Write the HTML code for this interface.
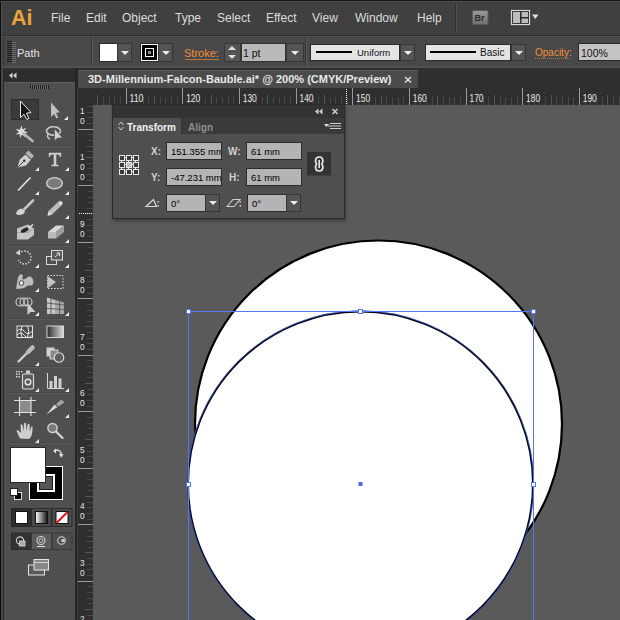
<!DOCTYPE html>
<html><head><meta charset="utf-8"><style>
*{margin:0;padding:0;box-sizing:border-box}
html,body{width:620px;height:620px;overflow:hidden;background:#5a5a5a;font-family:"Liberation Sans",sans-serif}
.a{position:absolute}
.mi{position:absolute;top:12px;font-size:12px;color:#dcdcdc;line-height:13px}
.t11{position:absolute;font-size:11px;line-height:12px}
.dd{position:absolute;background:#545454;border:1px solid #363636}
.dd:after{content:"";position:absolute;left:50%;top:50%;margin-left:-4px;margin-top:-2px;border-left:4px solid transparent;border-right:4px solid transparent;border-top:4px solid #ececec}
</style></head><body>
<div class="a" style="left:0;top:0;width:620px;height:35px;background:#404040;border-top:1px solid #181818"></div>
<div class="a" style="left:11px;top:7px;font-size:21.5px;font-weight:bold;color:#eca53a;line-height:22px">Ai</div>
<div class="mi" style="left:51px">File</div>
<div class="mi" style="left:86px">Edit</div>
<div class="mi" style="left:122px">Object</div>
<div class="mi" style="left:175px">Type</div>
<div class="mi" style="left:217px">Select</div>
<div class="mi" style="left:266px">Effect</div>
<div class="mi" style="left:312px">View</div>
<div class="mi" style="left:355px">Window</div>
<div class="mi" style="left:417px">Help</div>
<div class="a" style="left:455px;top:5px;width:1px;height:26px;background:#2f2f2f"></div>
<div class="a" style="left:456px;top:5px;width:1px;height:26px;background:#525252"></div>
<div class="a" style="left:0;top:35px;width:620px;height:33px;background:#484848;border-top:1px solid #2e2e2e"></div>
<div class="a" style="left:7px;top:41px;width:5px;height:22px;background:repeating-linear-gradient(#1e1e1e 0 1px,#484848 1px 2px)"></div>
<div class="a" style="left:12px;top:42px;width:4px;height:22px;background:repeating-linear-gradient(#6a6a6a 0 1px,#484848 1px 2px)"></div>
<div class="t11" style="left:17px;top:47px;font-size:11px;color:#e6e6e6">Path</div>
<div class="a" style="left:91px;top:38px;width:1px;height:28px;background:#333"></div>
<div class="a" style="left:92px;top:38px;width:1px;height:28px;background:#5c5c5c"></div>
<div class="a" style="left:305px;top:38px;width:1px;height:28px;background:#333"></div>
<div class="a" style="left:306px;top:38px;width:1px;height:28px;background:#5c5c5c"></div>
<div class="a" style="left:99px;top:43px;width:19px;height:19px;background:#fff;border:1px solid #2a2a2a"></div>
<div class="dd" style="left:117px;top:43px;width:15px;height:19px"></div>
<div class="a" style="left:140px;top:43px;width:19px;height:19px;background:#fff;border:1px solid #2a2a2a;padding:1px"><div style="width:15px;height:15px;background:#000;padding:3px"><div style="width:9px;height:9px;border:1px solid #fff;padding:1px"><div style="width:5px;height:5px;background:#000;padding:1px"><div style="width:3px;height:3px;background:#888"></div></div></div></div></div>
<div class="dd" style="left:158px;top:43px;width:15px;height:19px"></div>
<div class="t11" style="left:184px;top:47px;font-size:11px;color:#f0913a">Stroke:</div>
<div class="a" style="left:185px;top:59px;width:34px;height:1px;background:#b8763a"></div>
<div class="a" style="left:224px;top:43px;width:17px;height:19px;background:#545454;border:1px solid #363636"></div>
<div class="a" style="left:228px;top:46px;width:0;height:0;border-left:4px solid transparent;border-right:4px solid transparent;border-bottom:4px solid #ddd"></div>
<div class="a" style="left:228px;top:55px;width:0;height:0;border-left:4px solid transparent;border-right:4px solid transparent;border-top:4px solid #ddd"></div>
<div class="a" style="left:241px;top:43px;width:45px;height:19px;background:#b9b9b9;border:1px solid #333"></div>
<div class="t11" style="left:243px;top:47px;font-size:10.5px;color:#111">1 pt</div>
<div class="dd" style="left:286px;top:43px;width:18px;height:19px"></div>
<div class="a" style="left:310px;top:44px;width:90px;height:17px;background:#e4e4e4;border:1px solid #2a2a2a"></div>
<div class="a" style="left:316px;top:51px;width:36px;height:2px;background:#000"></div>
<div class="t11" style="left:357px;top:47px;font-size:9.5px;color:#111">Uniform</div>
<div class="dd" style="left:400px;top:44px;width:15px;height:17px"></div>
<div class="a" style="left:425px;top:44px;width:86px;height:17px;background:#e4e4e4;border:1px solid #2a2a2a"></div>
<div class="a" style="left:430px;top:51px;width:46px;height:2px;background:#000"></div>
<div class="t11" style="left:480px;top:47px;font-size:10px;color:#111">Basic</div>
<div class="dd" style="left:511px;top:44px;width:15px;height:17px"></div>
<div class="t11" style="left:535px;top:47px;font-size:10px;color:#f0913a">Opacity:</div>
<div class="a" style="left:535px;top:58px;width:35px;height:1px;background:repeating-linear-gradient(90deg,#b8763a 0 1px,transparent 1px 2px)"></div>
<div class="a" style="left:578px;top:43px;width:50px;height:18px;background:#c4c4c4;border:1px solid #2a2a2a"></div>
<div class="t11" style="left:581px;top:47px;font-size:10.5px;color:#111">100%</div>
<div class="a" style="left:0;top:36px;width:620px;height:1px;background:#515151"></div><div class="a" style="left:0;top:66px;width:620px;height:2px;background:#525252"></div>
<div class="a" style="left:0;top:68px;width:620px;height:21px;background:#303030"></div>
<div class="a" style="left:78px;top:70px;width:340px;height:18px;background:#4b4b4b;border-top:1px solid #575757"></div>
<div class="a" style="left:88px;top:73px;font-size:11px;font-weight:bold;color:#e8e8e8;line-height:13px">3D-Millennium-Falcon-Bauble.ai* @ 200% (CMYK/Preview)</div>
<svg class="a" style="left:0;top:0" width="620" height="100"><path d="M405,77 L411,82.5 M411,77 L405,82.5" stroke="#dcdcdc" stroke-width="1.5"/></svg>
<div class="a" style="left:0;top:0;width:1px;height:620px;background:#0e0e0e"></div>
<div class="a" style="left:1px;top:68px;width:3px;height:552px;background:#474747"></div>
<div class="a" style="left:3px;top:68px;width:1px;height:552px;background:#2a2a2a"></div>
<div class="a" style="left:1px;top:1px;width:1px;height:67px;background:#4c4c4c"></div>
<div class="a" style="left:3px;top:37px;width:1px;height:30px;background:#343434"></div>
<div class="a" style="left:0;top:1px;width:620px;height:1px;background:#4a4a4a"></div>
<div class="a" style="left:4px;top:70px;width:71px;height:550px;background:#4f4f4f"></div>
<div class="a" style="left:4px;top:70px;width:71px;height:12px;background:#2d2d2d"></div>
<div class="a" style="left:4px;top:82px;width:71px;height:1px;background:#5e5e5e"></div>
<div class="a" style="left:75px;top:68px;width:3px;height:552px;background:#262626"></div>
<div class="a" style="left:77px;top:88px;width:1px;height:532px;background:#3c3c3c"></div>
<div class="a" style="left:30px;top:85px;width:19px;height:4px;background:repeating-linear-gradient(90deg,#1e1e1e 0 1px,#6a6a6a 1px 2px)"></div>
<div class="a" style="left:11px;top:99px;width:28px;height:21px;background:#3a3a3a;border:1px solid #2e2e2e"></div>
<div class="a" style="left:8px;top:145px;width:64px;height:1px;background:#474747"></div>
<div class="a" style="left:8px;top:146px;width:64px;height:1px;background:#5a5a5a"></div>
<div class="a" style="left:8px;top:245px;width:64px;height:1px;background:#474747"></div>
<div class="a" style="left:8px;top:246px;width:64px;height:1px;background:#5a5a5a"></div>
<div class="a" style="left:8px;top:318px;width:64px;height:1px;background:#474747"></div>
<div class="a" style="left:8px;top:319px;width:64px;height:1px;background:#5a5a5a"></div>
<div class="a" style="left:8px;top:366px;width:64px;height:1px;background:#474747"></div>
<div class="a" style="left:8px;top:367px;width:64px;height:1px;background:#5a5a5a"></div>
<div class="a" style="left:8px;top:392px;width:64px;height:1px;background:#474747"></div>
<div class="a" style="left:8px;top:393px;width:64px;height:1px;background:#5a5a5a"></div>
<div class="a" style="left:8px;top:442px;width:64px;height:1px;background:#474747"></div>
<div class="a" style="left:8px;top:443px;width:64px;height:1px;background:#5a5a5a"></div>
<div class="a" style="left:78px;top:88px;width:542px;height:17px;background:#2f2f2f"></div>
<div class="a" style="left:78px;top:88px;width:15px;height:532px;background:#2f2f2f"></div>
<svg class="a" style="left:0;top:0" width="620" height="620" font-family="Liberation Sans, sans-serif"><line x1="97.5" y1="95" x2="97.5" y2="105" stroke="#555555" stroke-width="1"/><line x1="103.5" y1="97" x2="103.5" y2="105" stroke="#484848" stroke-width="1"/><line x1="109.5" y1="97" x2="109.5" y2="105" stroke="#484848" stroke-width="1"/><line x1="114.5" y1="97" x2="114.5" y2="105" stroke="#484848" stroke-width="1"/><line x1="120.5" y1="97" x2="120.5" y2="105" stroke="#484848" stroke-width="1"/><line x1="126.5" y1="88" x2="126.5" y2="105" stroke="#9a9a9a" stroke-width="1"/><line x1="131.5" y1="97" x2="131.5" y2="105" stroke="#484848" stroke-width="1"/><line x1="137.5" y1="97" x2="137.5" y2="105" stroke="#484848" stroke-width="1"/><line x1="143.5" y1="97" x2="143.5" y2="105" stroke="#484848" stroke-width="1"/><line x1="148.5" y1="97" x2="148.5" y2="105" stroke="#484848" stroke-width="1"/><line x1="154.5" y1="95" x2="154.5" y2="105" stroke="#555555" stroke-width="1"/><line x1="160.5" y1="97" x2="160.5" y2="105" stroke="#484848" stroke-width="1"/><line x1="165.5" y1="97" x2="165.5" y2="105" stroke="#484848" stroke-width="1"/><line x1="171.5" y1="97" x2="171.5" y2="105" stroke="#484848" stroke-width="1"/><line x1="177.5" y1="97" x2="177.5" y2="105" stroke="#484848" stroke-width="1"/><line x1="182.5" y1="88" x2="182.5" y2="105" stroke="#9a9a9a" stroke-width="1"/><line x1="188.5" y1="97" x2="188.5" y2="105" stroke="#484848" stroke-width="1"/><line x1="194.5" y1="97" x2="194.5" y2="105" stroke="#484848" stroke-width="1"/><line x1="199.5" y1="97" x2="199.5" y2="105" stroke="#484848" stroke-width="1"/><line x1="205.5" y1="97" x2="205.5" y2="105" stroke="#484848" stroke-width="1"/><line x1="211.5" y1="95" x2="211.5" y2="105" stroke="#555555" stroke-width="1"/><line x1="216.5" y1="97" x2="216.5" y2="105" stroke="#484848" stroke-width="1"/><line x1="222.5" y1="97" x2="222.5" y2="105" stroke="#484848" stroke-width="1"/><line x1="228.5" y1="97" x2="228.5" y2="105" stroke="#484848" stroke-width="1"/><line x1="233.5" y1="97" x2="233.5" y2="105" stroke="#484848" stroke-width="1"/><line x1="239.5" y1="88" x2="239.5" y2="105" stroke="#9a9a9a" stroke-width="1"/><line x1="245.5" y1="97" x2="245.5" y2="105" stroke="#484848" stroke-width="1"/><line x1="250.5" y1="97" x2="250.5" y2="105" stroke="#484848" stroke-width="1"/><line x1="256.5" y1="97" x2="256.5" y2="105" stroke="#484848" stroke-width="1"/><line x1="262.5" y1="97" x2="262.5" y2="105" stroke="#484848" stroke-width="1"/><line x1="267.5" y1="95" x2="267.5" y2="105" stroke="#555555" stroke-width="1"/><line x1="273.5" y1="97" x2="273.5" y2="105" stroke="#484848" stroke-width="1"/><line x1="279.5" y1="97" x2="279.5" y2="105" stroke="#484848" stroke-width="1"/><line x1="284.5" y1="97" x2="284.5" y2="105" stroke="#484848" stroke-width="1"/><line x1="290.5" y1="97" x2="290.5" y2="105" stroke="#484848" stroke-width="1"/><line x1="296.5" y1="88" x2="296.5" y2="105" stroke="#9a9a9a" stroke-width="1"/><line x1="301.5" y1="97" x2="301.5" y2="105" stroke="#484848" stroke-width="1"/><line x1="307.5" y1="97" x2="307.5" y2="105" stroke="#484848" stroke-width="1"/><line x1="313.5" y1="97" x2="313.5" y2="105" stroke="#484848" stroke-width="1"/><line x1="318.5" y1="97" x2="318.5" y2="105" stroke="#484848" stroke-width="1"/><line x1="324.5" y1="95" x2="324.5" y2="105" stroke="#555555" stroke-width="1"/><line x1="330.5" y1="97" x2="330.5" y2="105" stroke="#484848" stroke-width="1"/><line x1="335.5" y1="97" x2="335.5" y2="105" stroke="#484848" stroke-width="1"/><line x1="341.5" y1="97" x2="341.5" y2="105" stroke="#484848" stroke-width="1"/><line x1="347.5" y1="97" x2="347.5" y2="105" stroke="#484848" stroke-width="1"/><line x1="352.5" y1="88" x2="352.5" y2="105" stroke="#9a9a9a" stroke-width="1"/><line x1="358.5" y1="97" x2="358.5" y2="105" stroke="#484848" stroke-width="1"/><line x1="364.5" y1="97" x2="364.5" y2="105" stroke="#484848" stroke-width="1"/><line x1="369.5" y1="97" x2="369.5" y2="105" stroke="#484848" stroke-width="1"/><line x1="375.5" y1="97" x2="375.5" y2="105" stroke="#484848" stroke-width="1"/><line x1="381.5" y1="95" x2="381.5" y2="105" stroke="#555555" stroke-width="1"/><line x1="386.5" y1="97" x2="386.5" y2="105" stroke="#484848" stroke-width="1"/><line x1="392.5" y1="97" x2="392.5" y2="105" stroke="#484848" stroke-width="1"/><line x1="398.5" y1="97" x2="398.5" y2="105" stroke="#484848" stroke-width="1"/><line x1="403.5" y1="97" x2="403.5" y2="105" stroke="#484848" stroke-width="1"/><line x1="409.5" y1="88" x2="409.5" y2="105" stroke="#9a9a9a" stroke-width="1"/><line x1="415.5" y1="97" x2="415.5" y2="105" stroke="#484848" stroke-width="1"/><line x1="420.5" y1="97" x2="420.5" y2="105" stroke="#484848" stroke-width="1"/><line x1="426.5" y1="97" x2="426.5" y2="105" stroke="#484848" stroke-width="1"/><line x1="432.5" y1="97" x2="432.5" y2="105" stroke="#484848" stroke-width="1"/><line x1="437.5" y1="95" x2="437.5" y2="105" stroke="#555555" stroke-width="1"/><line x1="443.5" y1="97" x2="443.5" y2="105" stroke="#484848" stroke-width="1"/><line x1="449.5" y1="97" x2="449.5" y2="105" stroke="#484848" stroke-width="1"/><line x1="454.5" y1="97" x2="454.5" y2="105" stroke="#484848" stroke-width="1"/><line x1="460.5" y1="97" x2="460.5" y2="105" stroke="#484848" stroke-width="1"/><line x1="466.5" y1="88" x2="466.5" y2="105" stroke="#9a9a9a" stroke-width="1"/><line x1="471.5" y1="97" x2="471.5" y2="105" stroke="#484848" stroke-width="1"/><line x1="477.5" y1="97" x2="477.5" y2="105" stroke="#484848" stroke-width="1"/><line x1="483.5" y1="97" x2="483.5" y2="105" stroke="#484848" stroke-width="1"/><line x1="488.5" y1="97" x2="488.5" y2="105" stroke="#484848" stroke-width="1"/><line x1="494.5" y1="95" x2="494.5" y2="105" stroke="#555555" stroke-width="1"/><line x1="500.5" y1="97" x2="500.5" y2="105" stroke="#484848" stroke-width="1"/><line x1="505.5" y1="97" x2="505.5" y2="105" stroke="#484848" stroke-width="1"/><line x1="511.5" y1="97" x2="511.5" y2="105" stroke="#484848" stroke-width="1"/><line x1="517.5" y1="97" x2="517.5" y2="105" stroke="#484848" stroke-width="1"/><line x1="522.5" y1="88" x2="522.5" y2="105" stroke="#9a9a9a" stroke-width="1"/><line x1="528.5" y1="97" x2="528.5" y2="105" stroke="#484848" stroke-width="1"/><line x1="534.5" y1="97" x2="534.5" y2="105" stroke="#484848" stroke-width="1"/><line x1="539.5" y1="97" x2="539.5" y2="105" stroke="#484848" stroke-width="1"/><line x1="545.5" y1="97" x2="545.5" y2="105" stroke="#484848" stroke-width="1"/><line x1="551.5" y1="95" x2="551.5" y2="105" stroke="#555555" stroke-width="1"/><line x1="556.5" y1="97" x2="556.5" y2="105" stroke="#484848" stroke-width="1"/><line x1="562.5" y1="97" x2="562.5" y2="105" stroke="#484848" stroke-width="1"/><line x1="568.5" y1="97" x2="568.5" y2="105" stroke="#484848" stroke-width="1"/><line x1="573.5" y1="97" x2="573.5" y2="105" stroke="#484848" stroke-width="1"/><line x1="579.5" y1="88" x2="579.5" y2="105" stroke="#9a9a9a" stroke-width="1"/><line x1="585.5" y1="97" x2="585.5" y2="105" stroke="#484848" stroke-width="1"/><line x1="590.5" y1="97" x2="590.5" y2="105" stroke="#484848" stroke-width="1"/><line x1="596.5" y1="97" x2="596.5" y2="105" stroke="#484848" stroke-width="1"/><line x1="602.5" y1="97" x2="602.5" y2="105" stroke="#484848" stroke-width="1"/><line x1="607.5" y1="95" x2="607.5" y2="105" stroke="#555555" stroke-width="1"/><line x1="613.5" y1="97" x2="613.5" y2="105" stroke="#484848" stroke-width="1"/><line x1="619.5" y1="97" x2="619.5" y2="105" stroke="#484848" stroke-width="1"/><text x="129.5" y="101.6" font-size="10.5" fill="#e6e6e6" textLength="14" lengthAdjust="spacingAndGlyphs">110</text><text x="186.2" y="101.6" font-size="10.5" fill="#e6e6e6" textLength="14" lengthAdjust="spacingAndGlyphs">120</text><text x="242.8" y="101.6" font-size="10.5" fill="#e6e6e6" textLength="14" lengthAdjust="spacingAndGlyphs">130</text><text x="299.5" y="101.6" font-size="10.5" fill="#e6e6e6" textLength="14" lengthAdjust="spacingAndGlyphs">140</text><text x="356.1" y="101.6" font-size="10.5" fill="#e6e6e6" textLength="14" lengthAdjust="spacingAndGlyphs">150</text><text x="412.8" y="101.6" font-size="10.5" fill="#e6e6e6" textLength="14" lengthAdjust="spacingAndGlyphs">160</text><text x="469.5" y="101.6" font-size="10.5" fill="#e6e6e6" textLength="14" lengthAdjust="spacingAndGlyphs">170</text><text x="526.1" y="101.6" font-size="10.5" fill="#e6e6e6" textLength="14" lengthAdjust="spacingAndGlyphs">180</text><text x="582.8" y="101.6" font-size="10.5" fill="#e6e6e6" textLength="14" lengthAdjust="spacingAndGlyphs">190</text><line x1="346.5" y1="89" x2="346.5" y2="104" stroke="#f0f0f0" stroke-width="1" stroke-dasharray="1 1"/><clipPath id="vrc"><rect x="78" y="105" width="15" height="515"/></clipPath><g clip-path="url(#vrc)"><line x1="87" y1="106.5" x2="93" y2="106.5" stroke="#484848" stroke-width="1"/><line x1="87" y1="112.5" x2="93" y2="112.5" stroke="#484848" stroke-width="1"/><line x1="87" y1="117.5" x2="93" y2="117.5" stroke="#484848" stroke-width="1"/><line x1="87" y1="123.5" x2="93" y2="123.5" stroke="#484848" stroke-width="1"/><line x1="78" y1="129.5" x2="93" y2="129.5" stroke="#9a9a9a" stroke-width="1"/><line x1="87" y1="134.5" x2="93" y2="134.5" stroke="#484848" stroke-width="1"/><line x1="87" y1="140.5" x2="93" y2="140.5" stroke="#484848" stroke-width="1"/><line x1="87" y1="146.5" x2="93" y2="146.5" stroke="#484848" stroke-width="1"/><line x1="87" y1="151.5" x2="93" y2="151.5" stroke="#484848" stroke-width="1"/><line x1="85" y1="157.5" x2="93" y2="157.5" stroke="#555555" stroke-width="1"/><line x1="87" y1="163.5" x2="93" y2="163.5" stroke="#484848" stroke-width="1"/><line x1="87" y1="168.5" x2="93" y2="168.5" stroke="#484848" stroke-width="1"/><line x1="87" y1="174.5" x2="93" y2="174.5" stroke="#484848" stroke-width="1"/><line x1="87" y1="180.5" x2="93" y2="180.5" stroke="#484848" stroke-width="1"/><line x1="78" y1="185.5" x2="93" y2="185.5" stroke="#9a9a9a" stroke-width="1"/><line x1="87" y1="191.5" x2="93" y2="191.5" stroke="#484848" stroke-width="1"/><line x1="87" y1="197.5" x2="93" y2="197.5" stroke="#484848" stroke-width="1"/><line x1="87" y1="202.5" x2="93" y2="202.5" stroke="#484848" stroke-width="1"/><line x1="87" y1="208.5" x2="93" y2="208.5" stroke="#484848" stroke-width="1"/><line x1="85" y1="213.5" x2="93" y2="213.5" stroke="#555555" stroke-width="1"/><line x1="87" y1="219.5" x2="93" y2="219.5" stroke="#484848" stroke-width="1"/><line x1="87" y1="225.5" x2="93" y2="225.5" stroke="#484848" stroke-width="1"/><line x1="87" y1="230.5" x2="93" y2="230.5" stroke="#484848" stroke-width="1"/><line x1="87" y1="236.5" x2="93" y2="236.5" stroke="#484848" stroke-width="1"/><line x1="78" y1="242.5" x2="93" y2="242.5" stroke="#9a9a9a" stroke-width="1"/><line x1="87" y1="247.5" x2="93" y2="247.5" stroke="#484848" stroke-width="1"/><line x1="87" y1="253.5" x2="93" y2="253.5" stroke="#484848" stroke-width="1"/><line x1="87" y1="259.5" x2="93" y2="259.5" stroke="#484848" stroke-width="1"/><line x1="87" y1="264.5" x2="93" y2="264.5" stroke="#484848" stroke-width="1"/><line x1="85" y1="270.5" x2="93" y2="270.5" stroke="#555555" stroke-width="1"/><line x1="87" y1="276.5" x2="93" y2="276.5" stroke="#484848" stroke-width="1"/><line x1="87" y1="281.5" x2="93" y2="281.5" stroke="#484848" stroke-width="1"/><line x1="87" y1="287.5" x2="93" y2="287.5" stroke="#484848" stroke-width="1"/><line x1="87" y1="293.5" x2="93" y2="293.5" stroke="#484848" stroke-width="1"/><line x1="78" y1="298.5" x2="93" y2="298.5" stroke="#9a9a9a" stroke-width="1"/><line x1="87" y1="304.5" x2="93" y2="304.5" stroke="#484848" stroke-width="1"/><line x1="87" y1="310.5" x2="93" y2="310.5" stroke="#484848" stroke-width="1"/><line x1="87" y1="315.5" x2="93" y2="315.5" stroke="#484848" stroke-width="1"/><line x1="87" y1="321.5" x2="93" y2="321.5" stroke="#484848" stroke-width="1"/><line x1="85" y1="326.5" x2="93" y2="326.5" stroke="#555555" stroke-width="1"/><line x1="87" y1="332.5" x2="93" y2="332.5" stroke="#484848" stroke-width="1"/><line x1="87" y1="338.5" x2="93" y2="338.5" stroke="#484848" stroke-width="1"/><line x1="87" y1="343.5" x2="93" y2="343.5" stroke="#484848" stroke-width="1"/><line x1="87" y1="349.5" x2="93" y2="349.5" stroke="#484848" stroke-width="1"/><line x1="78" y1="355.5" x2="93" y2="355.5" stroke="#9a9a9a" stroke-width="1"/><line x1="87" y1="360.5" x2="93" y2="360.5" stroke="#484848" stroke-width="1"/><line x1="87" y1="366.5" x2="93" y2="366.5" stroke="#484848" stroke-width="1"/><line x1="87" y1="372.5" x2="93" y2="372.5" stroke="#484848" stroke-width="1"/><line x1="87" y1="377.5" x2="93" y2="377.5" stroke="#484848" stroke-width="1"/><line x1="85" y1="383.5" x2="93" y2="383.5" stroke="#555555" stroke-width="1"/><line x1="87" y1="389.5" x2="93" y2="389.5" stroke="#484848" stroke-width="1"/><line x1="87" y1="394.5" x2="93" y2="394.5" stroke="#484848" stroke-width="1"/><line x1="87" y1="400.5" x2="93" y2="400.5" stroke="#484848" stroke-width="1"/><line x1="87" y1="406.5" x2="93" y2="406.5" stroke="#484848" stroke-width="1"/><line x1="78" y1="411.5" x2="93" y2="411.5" stroke="#9a9a9a" stroke-width="1"/><line x1="87" y1="417.5" x2="93" y2="417.5" stroke="#484848" stroke-width="1"/><line x1="87" y1="423.5" x2="93" y2="423.5" stroke="#484848" stroke-width="1"/><line x1="87" y1="428.5" x2="93" y2="428.5" stroke="#484848" stroke-width="1"/><line x1="87" y1="434.5" x2="93" y2="434.5" stroke="#484848" stroke-width="1"/><line x1="85" y1="439.5" x2="93" y2="439.5" stroke="#555555" stroke-width="1"/><line x1="87" y1="445.5" x2="93" y2="445.5" stroke="#484848" stroke-width="1"/><line x1="87" y1="451.5" x2="93" y2="451.5" stroke="#484848" stroke-width="1"/><line x1="87" y1="456.5" x2="93" y2="456.5" stroke="#484848" stroke-width="1"/><line x1="87" y1="462.5" x2="93" y2="462.5" stroke="#484848" stroke-width="1"/><line x1="78" y1="468.5" x2="93" y2="468.5" stroke="#9a9a9a" stroke-width="1"/><line x1="87" y1="473.5" x2="93" y2="473.5" stroke="#484848" stroke-width="1"/><line x1="87" y1="479.5" x2="93" y2="479.5" stroke="#484848" stroke-width="1"/><line x1="87" y1="485.5" x2="93" y2="485.5" stroke="#484848" stroke-width="1"/><line x1="87" y1="490.5" x2="93" y2="490.5" stroke="#484848" stroke-width="1"/><line x1="85" y1="496.5" x2="93" y2="496.5" stroke="#555555" stroke-width="1"/><line x1="87" y1="502.5" x2="93" y2="502.5" stroke="#484848" stroke-width="1"/><line x1="87" y1="507.5" x2="93" y2="507.5" stroke="#484848" stroke-width="1"/><line x1="87" y1="513.5" x2="93" y2="513.5" stroke="#484848" stroke-width="1"/><line x1="87" y1="519.5" x2="93" y2="519.5" stroke="#484848" stroke-width="1"/><line x1="78" y1="524.5" x2="93" y2="524.5" stroke="#9a9a9a" stroke-width="1"/><line x1="87" y1="530.5" x2="93" y2="530.5" stroke="#484848" stroke-width="1"/><line x1="87" y1="536.5" x2="93" y2="536.5" stroke="#484848" stroke-width="1"/><line x1="87" y1="541.5" x2="93" y2="541.5" stroke="#484848" stroke-width="1"/><line x1="87" y1="547.5" x2="93" y2="547.5" stroke="#484848" stroke-width="1"/><line x1="85" y1="552.5" x2="93" y2="552.5" stroke="#555555" stroke-width="1"/><line x1="87" y1="558.5" x2="93" y2="558.5" stroke="#484848" stroke-width="1"/><line x1="87" y1="564.5" x2="93" y2="564.5" stroke="#484848" stroke-width="1"/><line x1="87" y1="569.5" x2="93" y2="569.5" stroke="#484848" stroke-width="1"/><line x1="87" y1="575.5" x2="93" y2="575.5" stroke="#484848" stroke-width="1"/><line x1="78" y1="581.5" x2="93" y2="581.5" stroke="#9a9a9a" stroke-width="1"/><line x1="87" y1="586.5" x2="93" y2="586.5" stroke="#484848" stroke-width="1"/><line x1="87" y1="592.5" x2="93" y2="592.5" stroke="#484848" stroke-width="1"/><line x1="87" y1="598.5" x2="93" y2="598.5" stroke="#484848" stroke-width="1"/><line x1="87" y1="603.5" x2="93" y2="603.5" stroke="#484848" stroke-width="1"/><line x1="85" y1="609.5" x2="93" y2="609.5" stroke="#555555" stroke-width="1"/><line x1="87" y1="615.5" x2="93" y2="615.5" stroke="#484848" stroke-width="1"/><text x="80" y="103.9" font-size="9.5" fill="#e6e6e6" textLength="4.6" lengthAdjust="spacingAndGlyphs">1</text><text x="80" y="113.9" font-size="9.5" fill="#e6e6e6" textLength="4.6" lengthAdjust="spacingAndGlyphs">1</text><text x="80" y="123.9" font-size="9.5" fill="#e6e6e6" textLength="4.6" lengthAdjust="spacingAndGlyphs">0</text><text x="80" y="160.4" font-size="9.5" fill="#e6e6e6" textLength="4.6" lengthAdjust="spacingAndGlyphs">1</text><text x="80" y="170.4" font-size="9.5" fill="#e6e6e6" textLength="4.6" lengthAdjust="spacingAndGlyphs">0</text><text x="80" y="180.4" font-size="9.5" fill="#e6e6e6" textLength="4.6" lengthAdjust="spacingAndGlyphs">0</text><text x="80" y="226.9" font-size="9.5" fill="#e6e6e6" textLength="4.6" lengthAdjust="spacingAndGlyphs">9</text><text x="80" y="236.9" font-size="9.5" fill="#e6e6e6" textLength="4.6" lengthAdjust="spacingAndGlyphs">0</text><text x="80" y="283.4" font-size="9.5" fill="#e6e6e6" textLength="4.6" lengthAdjust="spacingAndGlyphs">8</text><text x="80" y="293.4" font-size="9.5" fill="#e6e6e6" textLength="4.6" lengthAdjust="spacingAndGlyphs">0</text><text x="80" y="339.9" font-size="9.5" fill="#e6e6e6" textLength="4.6" lengthAdjust="spacingAndGlyphs">7</text><text x="80" y="349.9" font-size="9.5" fill="#e6e6e6" textLength="4.6" lengthAdjust="spacingAndGlyphs">0</text><text x="80" y="396.4" font-size="9.5" fill="#e6e6e6" textLength="4.6" lengthAdjust="spacingAndGlyphs">6</text><text x="80" y="406.4" font-size="9.5" fill="#e6e6e6" textLength="4.6" lengthAdjust="spacingAndGlyphs">0</text><text x="80" y="452.9" font-size="9.5" fill="#e6e6e6" textLength="4.6" lengthAdjust="spacingAndGlyphs">5</text><text x="80" y="462.9" font-size="9.5" fill="#e6e6e6" textLength="4.6" lengthAdjust="spacingAndGlyphs">0</text><text x="80" y="509.4" font-size="9.5" fill="#e6e6e6" textLength="4.6" lengthAdjust="spacingAndGlyphs">4</text><text x="80" y="519.4" font-size="9.5" fill="#e6e6e6" textLength="4.6" lengthAdjust="spacingAndGlyphs">0</text><text x="80" y="565.9" font-size="9.5" fill="#e6e6e6" textLength="4.6" lengthAdjust="spacingAndGlyphs">3</text><text x="80" y="575.9" font-size="9.5" fill="#e6e6e6" textLength="4.6" lengthAdjust="spacingAndGlyphs">0</text><text x="80" y="622.4" font-size="9.5" fill="#e6e6e6" textLength="4.6" lengthAdjust="spacingAndGlyphs">2</text><text x="80" y="632.4" font-size="9.5" fill="#e6e6e6" textLength="4.6" lengthAdjust="spacingAndGlyphs">0</text><line x1="79" y1="213.5" x2="92" y2="213.5" stroke="#f0f0f0" stroke-width="1" stroke-dasharray="1 1"/></g></svg>
<svg class="a" style="left:0;top:0" width="620" height="620">
<clipPath id="cv"><rect x="94" y="105" width="526" height="515"/></clipPath>
<g clip-path="url(#cv)">
<circle cx="378.5" cy="424" r="183.5" fill="#fff" stroke="#000" stroke-width="2.2"/>
<circle cx="360.5" cy="484" r="172.5" fill="#fff" stroke="#05051a" stroke-width="2"/>
<circle cx="360.5" cy="484" r="173.3" fill="none" stroke="#4a6ee0" stroke-width="0.8" opacity="0.85"/>
<rect x="188.5" y="311.5" width="345" height="400" fill="none" stroke="#5577ee" stroke-width="1"/>
<rect x="186.5" y="309.5" width="4" height="4" fill="#fff" stroke="#5577ee" stroke-width="1"/>
<rect x="358.5" y="309.5" width="4" height="4" fill="#fff" stroke="#5577ee" stroke-width="1"/>
<rect x="531.5" y="309.5" width="4" height="4" fill="#fff" stroke="#5577ee" stroke-width="1"/>
<rect x="186.5" y="482.5" width="4" height="4" fill="#fff" stroke="#5577ee" stroke-width="1"/>
<rect x="531.5" y="482.5" width="4" height="4" fill="#fff" stroke="#5577ee" stroke-width="1"/>
<rect x="358.5" y="482" width="4" height="4" fill="#4a6ee0"/>
</g></svg>
<div class="a" style="left:112px;top:104px;width:233px;height:115px;background:#2a2a2a;box-shadow:1px 2px 3px rgba(0,0,0,0.35)"></div>
<div class="a" style="left:113px;top:105px;width:231px;height:13px;background:#333333"></div>
<div class="a" style="left:113px;top:118px;width:231px;height:16px;background:#3a3a3a"></div>
<div class="a" style="left:113px;top:118px;width:68px;height:16px;background:#4f4f4f"></div>
<div class="a" style="left:113px;top:134px;width:231px;height:84px;background:#4f4f4f"></div>
<svg class="a" style="left:0;top:0" width="620" height="620"><path d="M315,111.5 L318.5,108.5 L318.5,114.5 Z M319,111.5 L322.5,108.5 L322.5,114.5 Z" fill="#d0d0d0"/><path d="M332.5,109 L337.5,114 M337.5,109 L332.5,114" stroke="#d8d8d8" stroke-width="1.3"/><path d="M118.5,125 L121,122 L123.5,125 M118.5,127 L121,130 L123.5,127" stroke="#d0d0d0" stroke-width="1" fill="none"/><path d="M324,124 L329,124 L326.5,127 Z" fill="#e0e0e0"/><path d="M330,123.5 H341 M328,126 H341 M330,128.5 H341" stroke="#d0d0d0" stroke-width="1"/></svg>
<div class="a" style="left:127px;top:122px;font-size:10px;font-weight:bold;color:#f2f2f2;line-height:11px">Transform</div>
<div class="a" style="left:188px;top:122px;font-size:10px;font-weight:bold;color:#8e8e8e;line-height:11px">Align</div>
<svg class="a" style="left:0;top:0" width="620" height="620"><rect x="119.5" y="155.5" width="5" height="5" fill="#3a3a3a" stroke="#e6e6e6" stroke-width="1"/><rect x="119.5" y="162.5" width="5" height="5" fill="#3a3a3a" stroke="#e6e6e6" stroke-width="1"/><rect x="119.5" y="169.5" width="5" height="5" fill="#3a3a3a" stroke="#e6e6e6" stroke-width="1"/><line x1="124.5" y1="157.5" x2="126.5" y2="157.5" stroke="#e6e6e6"/><line x1="131.5" y1="157.5" x2="133.5" y2="157.5" stroke="#e6e6e6"/><line x1="121.5" y1="160.5" x2="121.5" y2="162.5" stroke="#e6e6e6"/><line x1="121.5" y1="167.5" x2="121.5" y2="169.5" stroke="#e6e6e6"/><rect x="126.5" y="155.5" width="5" height="5" fill="#3a3a3a" stroke="#e6e6e6" stroke-width="1"/><rect x="126.5" y="162.5" width="5" height="5" fill="#bdbdbd" stroke="#e6e6e6" stroke-width="1"/><rect x="126.5" y="169.5" width="5" height="5" fill="#3a3a3a" stroke="#e6e6e6" stroke-width="1"/><line x1="124.5" y1="164.5" x2="126.5" y2="164.5" stroke="#e6e6e6"/><line x1="131.5" y1="164.5" x2="133.5" y2="164.5" stroke="#e6e6e6"/><line x1="128.5" y1="160.5" x2="128.5" y2="162.5" stroke="#e6e6e6"/><line x1="128.5" y1="167.5" x2="128.5" y2="169.5" stroke="#e6e6e6"/><rect x="133.5" y="155.5" width="5" height="5" fill="#3a3a3a" stroke="#e6e6e6" stroke-width="1"/><rect x="133.5" y="162.5" width="5" height="5" fill="#3a3a3a" stroke="#e6e6e6" stroke-width="1"/><rect x="133.5" y="169.5" width="5" height="5" fill="#3a3a3a" stroke="#e6e6e6" stroke-width="1"/><line x1="124.5" y1="171.5" x2="126.5" y2="171.5" stroke="#e6e6e6"/><line x1="131.5" y1="171.5" x2="133.5" y2="171.5" stroke="#e6e6e6"/><line x1="135.5" y1="160.5" x2="135.5" y2="162.5" stroke="#e6e6e6"/><line x1="135.5" y1="167.5" x2="135.5" y2="169.5" stroke="#e6e6e6"/><rect x="307" y="152" width="24" height="23.5" fill="#333333"/><path d="M319.2,157 C322.3,157 322.9,159 322.9,161 C322.9,162.6 321.9,163.4 321.9,164 C321.9,164.6 322.9,165.4 322.9,167 C322.9,169 322.3,171 319.2,171 C316.1,171 315.5,169 315.5,167 C315.5,165.4 316.5,164.6 316.5,164 C316.5,163.4 315.5,162.6 315.5,161 C315.5,159 316.1,157 319.2,157 Z" fill="#3a3a3a" stroke="#e8e8e8" stroke-width="1.7"/><line x1="319.2" y1="160" x2="319.2" y2="168" stroke="#f0f0f0" stroke-width="1.5"/><path d="M146,206.5 L153.5,199.5 L156.5,206.5 Z" fill="none" stroke="#dadada" stroke-width="1.2"/><rect x="157.5" y="201" width="1.5" height="1.5" fill="#d0d0d0"/><rect x="157.5" y="205" width="1.5" height="1.5" fill="#d0d0d0"/><path d="M227,206.5 L233,199.5 L240,199.5 L234,206.5 Z" fill="none" stroke="#d0d0d0" stroke-width="1.1"/><rect x="239.5" y="201" width="1.5" height="1.5" fill="#d0d0d0"/><rect x="239.5" y="205" width="1.5" height="1.5" fill="#d0d0d0"/></svg>
<div class="a" style="left:151px;top:147px;font-size:10px;font-weight:bold;color:#d2d2d2;line-height:10px">X:</div>
<div class="a" style="left:151px;top:173px;font-size:10px;font-weight:bold;color:#d2d2d2;line-height:10px">Y:</div>
<div class="a" style="left:228px;top:147px;font-size:10px;font-weight:bold;color:#d2d2d2;line-height:10px">W:</div>
<div class="a" style="left:229px;top:173px;font-size:10px;font-weight:bold;color:#d2d2d2;line-height:10px">H:</div>
<div class="a" style="left:166px;top:142px;width:56px;height:18px;background:#b4b4b4;border:1px solid #2c2c2c;overflow:hidden"><div style="position:absolute;left:4px;top:3px;font-size:9.5px;color:#000;line-height:11px;white-space:nowrap">151.355 mm</div></div>
<div class="a" style="left:166px;top:168px;width:56px;height:18px;background:#b4b4b4;border:1px solid #2c2c2c;overflow:hidden"><div style="position:absolute;left:4px;top:3px;font-size:9.5px;color:#000;line-height:11px;white-space:nowrap">-47.231 mm</div></div>
<div class="a" style="left:246px;top:142px;width:56px;height:18px;background:#b4b4b4;border:1px solid #2c2c2c;overflow:hidden"><div style="position:absolute;left:4px;top:3px;font-size:9.5px;color:#000;line-height:11px;white-space:nowrap">61 mm</div></div>
<div class="a" style="left:246px;top:168px;width:56px;height:18px;background:#b4b4b4;border:1px solid #2c2c2c;overflow:hidden"><div style="position:absolute;left:4px;top:3px;font-size:9.5px;color:#000;line-height:11px;white-space:nowrap">61 mm</div></div>
<div class="a" style="left:166px;top:194px;width:40px;height:18px;background:#b4b4b4;border:1px solid #2c2c2c;overflow:hidden"><div style="position:absolute;left:4px;top:3px;font-size:9.5px;color:#000;line-height:11px;white-space:nowrap">0&#176;</div></div>
<div class="a" style="left:247px;top:194px;width:40px;height:18px;background:#b4b4b4;border:1px solid #2c2c2c;overflow:hidden"><div style="position:absolute;left:4px;top:3px;font-size:9.5px;color:#000;line-height:11px;white-space:nowrap">0&#176;</div></div>
<div class="dd" style="left:205px;top:194px;width:15px;height:18px"></div>
<div class="dd" style="left:286px;top:194px;width:15px;height:18px"></div>
<svg class="a" style="left:0;top:0" width="620" height="620"><path d="M20.5,101 L20.5,117.5 L24,114.2 L26.8,119.5 L29,118.5 L26.4,113.2 L31,112.6 Z" fill="#141414" stroke="#e6e6e6" stroke-width="1"/><path d="M51,102.5 L51,117 L54,114 L56.5,118.5 L58.3,117.6 L56,113 L59.8,112.3 Z" fill="#bdbdbd"/><path d="M64,120 L68,120 L68,116 Z" fill="#e8e8e8"/><path d="M21.5,125.5 L22.6,129.5 L26.5,127.5 L24,131 L28,132.5 L24,133.5 L25.5,137.5 L22,134.5 L20,138 L19.8,134 L15.5,134.5 L19,132 L15.5,129 L19.8,129.8 Z" fill="#dcdcdc"/><line x1="23.5" y1="133.5" x2="32.5" y2="141" stroke="#b8b8b8" stroke-width="2.6" stroke-linecap="round"/><ellipse cx="53.5" cy="131" rx="7" ry="4.3" fill="none" stroke="#c8c8c8" stroke-width="1.6"/><path d="M48,134 Q46.5,138 50,139" fill="none" stroke="#c8c8c8" stroke-width="1.4"/><path d="M54.5,128.5 L54.5,141 L57.5,138 L62.5,138 Z" fill="#d0d0d0" stroke="#444" stroke-width="0.6"/><path d="M17.5,167.5 L19.8,159.5 L25.5,154.5 L30.8,159.8 L26,165.5 Z" fill="#d0d0d0"/><path d="M17.8,167.2 L23.8,161.2" stroke="#333" stroke-width="0.9"/><circle cx="24.2" cy="160.8" r="1.2" fill="#333"/><path d="M25.5,153.2 L28.5,150.5 L34,156 L31.3,158.8 Z" fill="#b4b4b4"/><path d="M35,171 L39,171 L39,167 Z" fill="#e8e8e8"/><path d="M48.8,152.7 H61.2 V157 L60.3,157 Q59.8,154.6 57.2,154.6 H56.3 V164.6 L58.6,165 V166.3 H51.4 V165 L53.7,164.6 V154.6 H52.8 Q50.2,154.6 49.7,157 L48.8,157 Z" fill="#cdcdcd"/><path d="M65,171 L69,171 L69,167 Z" fill="#e8e8e8"/><line x1="18" y1="190.5" x2="30.5" y2="177.5" stroke="#e6e6e6" stroke-width="1.6"/><path d="M35,195 L39,195 L39,191 Z" fill="#e8e8e8"/><ellipse cx="54.5" cy="183.2" rx="7.8" ry="5.6" fill="#7a7a7a" stroke="#cfcfcf" stroke-width="1.4"/><path d="M65,195 L69,195 L69,191 Z" fill="#e8e8e8"/><line x1="33" y1="200.5" x2="24" y2="209.5" stroke="#c4c4c4" stroke-width="2.6" stroke-linecap="round"/><path d="M16,214 Q16.5,209.5 21.5,208.5 L25,211.5 Q24,215 18.5,215 Z" fill="#d4d4d4"/><line x1="60" y1="203.5" x2="50" y2="213" stroke="#bdbdbd" stroke-width="5"/><path d="M47.5,216 L48.5,211 L52,214.5 Z" fill="#dcdcdc"/><circle cx="60.3" cy="203.2" r="2.2" fill="#e6e6e6" stroke="#888" stroke-width="0.6"/><path d="M65,219 L69,219 L69,215 Z" fill="#e8e8e8"/><path d="M17,228.5 L28,224.5 L34,228.5 L34,235 L28,239.5 L17,239.5 Z" fill="#c4c4c4"/><path d="M17,232.5 L28,232.5 L34,228.5" fill="none" stroke="#999" stroke-width="0.8"/><ellipse cx="25" cy="230" rx="4.5" ry="2" transform="rotate(-25 25 230)" fill="#262626"/><line x1="28" y1="228.5" x2="33" y2="224.5" stroke="#e6e6e6" stroke-width="1.6"/><path d="M48,232 L56,225.5 L64,225.5 L56,232 Z" fill="#d6d6d6"/><path d="M48,232 L56,232 L56,238.5 L48,238.5 Z" fill="#bcbcbc"/><path d="M56,232 L64,225.5 L64,232 L56,238.5 Z" fill="#9c9c9c"/><path d="M65,243 L69,243 L69,239 Z" fill="#e8e8e8"/><path d="M19,254 A6.5,6.5 0 1 1 18.5,260" fill="none" stroke="#c8c8c8" stroke-width="1.6" stroke-dasharray="1.6 1.4"/><path d="M20,249.5 L20,255.5 L15.5,253 Z" fill="#d0d0d0"/><path d="M35,268 L39,268 L39,264 Z" fill="#e8e8e8"/><rect x="46.5" y="256.5" width="10" height="8" fill="none" stroke="#dcdcdc" stroke-width="1"/><rect x="51.5" y="250.5" width="11" height="9.5" fill="#5a5a5a" stroke="#dcdcdc" stroke-width="1"/><path d="M55,257 L59.5,253 M56.5,253 L59.5,253 L59.5,256" fill="none" stroke="#dcdcdc" stroke-width="1"/><path d="M65,268 L69,268 L69,264 Z" fill="#e8e8e8"/><path d="M16,289 L17,283 C17.5,279 18,276 20,274.5 C22,273.5 23.5,275.5 22.5,277.5 C22,279 23,280 25,279 C27,278 28,276 30,276.5 C33,277.5 34,281 33,284 C32,286.5 29.5,285 28,285.5 C26,286.5 25,288 22,288.5 Z" fill="#bdbdbd"/><circle cx="21.5" cy="283" r="2.3" fill="#eee" stroke="#333" stroke-width="0.9"/><path d="M35,292 L39,292 L39,288 Z" fill="#e8e8e8"/><rect x="47.5" y="275.5" width="15.5" height="13" fill="none" stroke="#e0e0e0" stroke-width="1" stroke-dasharray="1.5 1.5"/><path d="M47.5,276 L47.5,288.5 L56,282 Z" fill="#c4c4c4"/><circle cx="20" cy="302" r="4" fill="none" stroke="#cfcfcf" stroke-width="1.1"/><circle cx="24" cy="302" r="4" fill="none" stroke="#cfcfcf" stroke-width="1.1"/><circle cx="28" cy="302" r="4" fill="none" stroke="#cfcfcf" stroke-width="1.1"/><path d="M27.5,303 L27.5,315 L30.5,312 L35.5,312 Z" fill="#d0d0d0"/><path d="M35,316 L39,316 L39,312 Z" fill="#e8e8e8"/><path d="M47,297.5 L55,300 L55,314 L47,314 Z" fill="#c8c8c8"/><path d="M55,300 L64,302.5 L64,314 L55,314 Z" fill="#a8a8a8"/><path d="M51,298.5 V314 M47,303 L64,305 M47,308.5 L64,309.5 M59.5,301.5 V314" stroke="#555" stroke-width="0.9"/><path d="M65,316 L69,316 L69,312 Z" fill="#e8e8e8"/><rect x="17" y="326" width="15.5" height="11.5" fill="#4a4a4a" stroke="#e6e6e6" stroke-width="1"/><path d="M17,331 Q21,327 24.5,331.5 T32.5,331 M17,335 Q21,331 24.5,335.5 T32.5,335 M22,326 Q19.5,331.5 22,337.5 M27.5,326 Q30,331.5 27.5,337.5" fill="none" stroke="#e6e6e6" stroke-width="1"/><defs><linearGradient id="gr" x1="0" x2="1"><stop offset="0" stop-color="#2a2a2a"/><stop offset="1" stop-color="#e0e0e0"/></linearGradient></defs><rect x="47" y="326" width="16.5" height="11.5" fill="url(#gr)" stroke="#d8d8d8" stroke-width="1"/><line x1="18.5" y1="361.5" x2="28" y2="352" stroke="#cfcfcf" stroke-width="2.4" stroke-linecap="round"/><line x1="28" y1="352" x2="32.5" y2="347.5" stroke="#bdbdbd" stroke-width="4.5" stroke-linecap="round"/><path d="M35,366 L39,366 L39,362 Z" fill="#e8e8e8"/><rect x="46.5" y="347.5" width="8" height="9" fill="#cfcfcf"/><rect x="50" y="350" width="8" height="9" fill="#8a8a8a" stroke="#e0e0e0" stroke-width="0.9"/><circle cx="59" cy="357.5" r="4.8" fill="#5e5e5e" stroke="#e0e0e0" stroke-width="1.1"/><rect x="16" y="371" width="1.4" height="1.4" fill="#e0e0e0"/><rect x="18.5" y="371" width="1.4" height="1.4" fill="#e0e0e0"/><rect x="16" y="373.5" width="1.4" height="1.4" fill="#e0e0e0"/><rect x="18.5" y="373.5" width="1.4" height="1.4" fill="#e0e0e0"/><rect x="21" y="371" width="1.4" height="1.4" fill="#e0e0e0"/><rect x="16" y="376" width="1.4" height="1.4" fill="#e0e0e0"/><rect x="18.5" y="376" width="1.4" height="1.4" fill="#e0e0e0"/><rect x="26" y="370.5" width="4" height="3" fill="#cfcfcf"/><rect x="22.5" y="374" width="11" height="15" rx="1.5" fill="#5a5a5a" stroke="#dedede" stroke-width="1.1"/><circle cx="28" cy="382" r="2.8" fill="none" stroke="#e6e6e6" stroke-width="1.4"/><path d="M35,392 L39,392 L39,388 Z" fill="#e8e8e8"/><path d="M47.5,373 V388.5 H64" fill="none" stroke="#d4d4d4" stroke-width="1"/><rect x="49.5" y="381" width="3" height="7" fill="#cfcfcf"/><rect x="54" y="376" width="3" height="12" fill="#cfcfcf"/><rect x="58.5" y="378.5" width="3" height="9.5" fill="#cfcfcf"/><path d="M65,392 L69,392 L69,388 Z" fill="#e8e8e8"/><rect x="19.5" y="400" width="11.5" height="13" fill="#8c8c8c"/><path d="M14,400.5 H36 M14,412.5 H36 M19.5,397 V416 M31,397 V416" stroke="#e2e2e2" stroke-width="1.1"/><path d="M46.5,414.5 L54.5,404.5 L57.5,407 Z" fill="#d8d8d8"/><path d="M56,404 L61.5,399.5 L64.5,402.5 L58.5,406.5 Z" fill="#a4a4a4"/><path d="M65,418 L69,418 L69,414 Z" fill="#e8e8e8"/><path d="M20,438.5 L17,432 Q16,430 17.8,430 L21,433 L20.5,425 Q21.5,423.5 22.5,425 L23.5,431 L24,423.5 Q25,422 26,423.5 L26.5,431 L27.5,424.5 Q28.5,423 29.5,424.5 L29.8,431.5 L31,427 Q32,426 32.7,427.5 L32,434 Q31,438 29,439 Z" fill="#cfcfcf"/><path d="M35,443 L39,443 L39,439 Z" fill="#e8e8e8"/><circle cx="52.5" cy="428" r="4.6" fill="#7a7a7a" stroke="#cfcfcf" stroke-width="1.5"/><line x1="56" y1="431.5" x2="62.5" y2="438" stroke="#cfcfcf" stroke-width="2.4" stroke-linecap="round"/><path d="M9,75.5 L12.5,72.5 L12.5,78.5 Z M13,75.5 L16.5,72.5 L16.5,78.5 Z" fill="#d0d0d0"/><rect x="29" y="466" width="34" height="34" fill="#fff"/><rect x="30" y="467" width="32" height="32" fill="#000"/><rect x="37" y="474" width="18" height="18" fill="#fff"/><rect x="39" y="476" width="14" height="14" fill="#1a1a1a"/><rect x="40" y="477" width="12" height="12" fill="#555"/><rect x="10.5" y="447.5" width="35" height="35" fill="#fff" stroke="#2a2a2a" stroke-width="1"/><path d="M54.5,451 Q58,448.5 61,452.5 L61,455" fill="none" stroke="#d8d8d8" stroke-width="1.4"/><path d="M53,451 L56,448.5 L56,453.5 Z M59,454 L63.5,454 L61.2,457.8 Z" fill="#e0e0e0"/><rect x="14.5" y="492.5" width="7" height="7" fill="#000" stroke="#e0e0e0" stroke-width="1"/><rect x="10.5" y="488.5" width="7" height="7" fill="#fff" stroke="#222" stroke-width="1"/><rect x="11" y="508" width="61" height="19" fill="#3c3c3c"/><rect x="11.5" y="508.5" width="19.5" height="18" fill="#2e2e2e" stroke="#262626"/><rect x="15.5" y="511.5" width="12" height="12" fill="#fff" stroke="#111" stroke-width="1"/><defs><linearGradient id="g2" x1="0" x2="1"><stop offset="0" stop-color="#fff"/><stop offset="1" stop-color="#111"/></linearGradient></defs><rect x="31.5" y="508.5" width="20" height="18" fill="#4a4a4a" stroke="#2c2c2c"/><rect x="35.5" y="511.5" width="12" height="12" fill="url(#g2)" stroke="#111" stroke-width="1"/><rect x="52" y="508.5" width="20" height="18" fill="#4a4a4a" stroke="#2c2c2c"/><rect x="56" y="511.5" width="12" height="12" fill="#fff" stroke="#111" stroke-width="1"/><line x1="56.5" y1="523" x2="67.5" y2="512" stroke="#e01010" stroke-width="2"/><rect x="11.5" y="533" width="19.5" height="16.5" fill="#333" stroke="#2a2a2a"/><rect x="31.5" y="533" width="20" height="16.5" fill="#5c5c5c" stroke="#3a3a3a"/><rect x="52" y="533" width="20" height="16.5" fill="#4e4e4e" stroke="#3a3a3a"/><circle cx="20" cy="540.5" r="3.6" fill="none" stroke="#d0d0d0" stroke-width="1.1"/><rect x="19.5" y="541" width="5.5" height="5" fill="#aaa" stroke="#ddd" stroke-width="0.8"/><circle cx="41" cy="540.5" r="4" fill="none" stroke="#d0d0d0" stroke-width="1.1"/><circle cx="41" cy="540.5" r="2" fill="none" stroke="#d0d0d0" stroke-width="0.8"/><path d="M37,546.5 H45" stroke="#ddd"/><circle cx="61.5" cy="540.5" r="3.8" fill="none" stroke="#d0d0d0" stroke-width="1.1"/><rect x="61.5" y="539" width="3" height="3" fill="#ccc"/><rect x="28.5" y="565" width="16" height="10" fill="#5a5a5a" stroke="#e6e6e6" stroke-width="1"/><rect x="34" y="559.5" width="14.5" height="10.5" fill="#888" stroke="#e6e6e6" stroke-width="1"/><path d="M34,562.5 H48.5" stroke="#e6e6e6" stroke-width="0.8"/></svg>
<svg class="a" style="left:0;top:0" width="620" height="620"><defs><linearGradient id="brg" x1="0" y1="0" x2="0" y2="1"><stop offset="0" stop-color="#9a9a9a"/><stop offset="1" stop-color="#6e6e6e"/></linearGradient></defs><rect x="472.5" y="10.5" width="15.5" height="14" rx="1" fill="url(#brg)" stroke="#5a5a5a" stroke-width="1"/><text x="474.5" y="21" font-size="9" font-weight="bold" fill="#2a2a2a" font-family="Liberation Sans, sans-serif">Br</text><rect x="511.5" y="10.5" width="18" height="14" fill="#2a2a2a" stroke="#d8d8d8" stroke-width="1.2"/><rect x="513" y="12" width="7" height="11" fill="#bdbdbd"/><rect x="521.5" y="12" width="6.5" height="5" fill="#bdbdbd"/><rect x="521.5" y="18.5" width="6.5" height="4.5" fill="#bdbdbd"/><path d="M532,14.5 L538.5,14.5 L535.25,19 Z" fill="#e0e0e0"/></svg>
</body></html>
